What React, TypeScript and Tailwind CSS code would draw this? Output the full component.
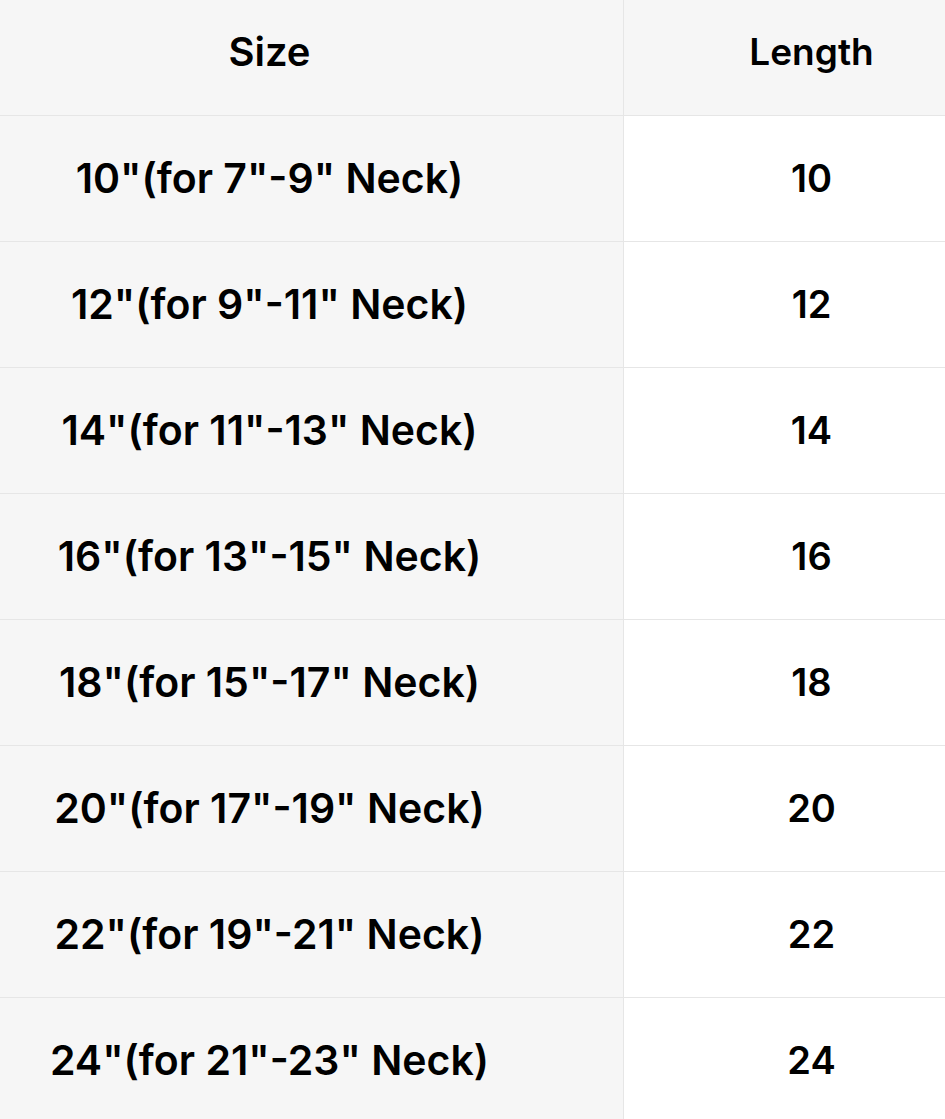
import React from 'react';

const rows = [
  { size: '10"(for 7"-9" Neck)', length: '10' },
  { size: '12"(for 9"-11" Neck)', length: '12' },
  { size: '14"(for 11"-13" Neck)', length: '14' },
  { size: '16"(for 13"-15" Neck)', length: '16' },
  { size: '18"(for 15"-17" Neck)', length: '18' },
  { size: '20"(for 17"-19" Neck)', length: '20' },
  { size: '22"(for 19"-21" Neck)', length: '22' },
  { size: '24"(for 21"-23" Neck)', length: '24' },
];

export default function App() {
  return (
    <div
      className="w-[945px] h-[1119px] overflow-hidden bg-white text-black"
      style={{ fontFamily: 'Inter, "Open Sans", sans-serif' }}
    >
      <div className="grid grid-cols-[624px_1fr]">
        <div className="h-[116px] bg-[#f6f6f6] border-b border-r border-[#e6e6e6] flex items-center justify-center pr-[84px] pb-[11px] text-[40px] font-semibold">
          Size
        </div>
        <div className="h-[116px] bg-[#f6f6f6] border-b border-[#e6e6e6] flex items-center justify-center pl-[54px] pb-[11px] text-[37px] font-semibold">
          Length
        </div>
        {rows.map((r) => (
          <React.Fragment key={r.length}>
            <div className="h-[126px] bg-[#f6f6f6] border-b border-r border-[#e6e6e6] flex items-center justify-center pr-[84px] text-[41px] font-semibold">
              {r.size}
            </div>
            <div className="h-[126px] bg-white border-b border-[#e6e6e6] flex items-center justify-center pl-[54px] text-[38px] font-semibold">
              {r.length}
            </div>
          </React.Fragment>
        ))}
      </div>
    </div>
  );
}
